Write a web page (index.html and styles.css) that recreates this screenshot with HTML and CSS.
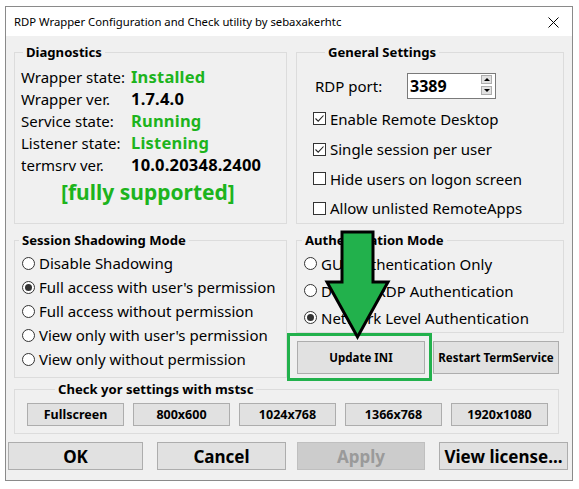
FILE: index.html
```html
<!DOCTYPE html>
<html>
<head>
<meta charset="utf-8">
<link rel="stylesheet" href="styles.css">
</head>
<body>
<div class="window">
  <div class="titlebar">
    <span class="title">RDP Wrapper Configuration and Check utility by sebaxakerhtc</span>
    <svg class="close" width="11" height="11" viewBox="0 0 11 11"><path d="M0.5 0.5 L10.5 10.5 M10.5 0.5 L0.5 10.5" stroke="#000" stroke-width="1" fill="none"/></svg>
  </div>
  <div class="client">
    <div class="row-top">
      <fieldset class="group diag">
        <legend>Diagnostics</legend>
        <div class="diag-grid">
          <span>Wrapper state:</span><span class="val green">Installed</span>
          <span>Wrapper ver.</span><span class="val">1.7.4.0</span>
          <span>Service state:</span><span class="val green">Running</span>
          <span>Listener state:</span><span class="val green">Listening</span>
          <span>termsrv ver.</span><span class="val">10.0.20348.2400</span>
        </div>
        <div class="supported">[fully supported]</div>
      </fieldset>
      <fieldset class="group general">
        <legend>General Settings</legend>
        <div class="port-row">
          <span class="port-label">RDP port:</span>
          <div class="spin-edit">
            <span class="port-val">3389</span>
            <div class="spin">
              <span class="spin-btn"><span class="tri-up"></span></span>
              <span class="spin-btn"><span class="tri-down"></span></span>
            </div>
          </div>
        </div>
        <div class="checks">
          <div class="opt"><span class="cbox"><svg width="11" height="11" viewBox="0 0 11 11"><path d="M1.5 5.5 L4.2 8.2 L9.5 2.5" stroke="#222" stroke-width="1.1" fill="none"/></svg></span>Enable Remote Desktop</div>
          <div class="opt"><span class="cbox"><svg width="11" height="11" viewBox="0 0 11 11"><path d="M1.5 5.5 L4.2 8.2 L9.5 2.5" stroke="#222" stroke-width="1.1" fill="none"/></svg></span>Single session per user</div>
          <div class="opt"><span class="cbox"></span>Hide users on logon screen</div>
          <div class="opt"><span class="cbox"></span>Allow unlisted RemoteApps</div>
        </div>
      </fieldset>
    </div>

    <div class="row-mid">
      <fieldset class="group shadow">
        <legend>Session Shadowing Mode</legend>
        <div class="radio-list">
          <div class="opt"><span class="radio"></span>Disable Shadowing</div>
          <div class="opt"><span class="radio on"></span>Full access with user's permission</div>
          <div class="opt"><span class="radio"></span>Full access without permission</div>
          <div class="opt"><span class="radio"></span>View only with user's permission</div>
          <div class="opt"><span class="radio"></span>View only without permission</div>
        </div>
      </fieldset>
      <div class="right-col">
        <fieldset class="group auth">
          <legend>Authentication Mode</legend>
          <div class="radio-list auth-list">
            <div class="opt"><span class="radio"></span>GUI Authentication Only</div>
            <div class="opt"><span class="radio"></span>Default RDP Authentication</div>
            <div class="opt"><span class="radio on"></span>Network Level Authentication</div>
          </div>
        </fieldset>
        <div class="action-row">
          <button class="btn btn-small btn-update">Update INI</button>
          <button class="btn btn-small btn-restart">Restart TermService</button>
        </div>
      </div>
    </div>

    <fieldset class="group check">
      <legend>Check yor settings with mstsc</legend>
      <div class="res-row">
        <button class="btn btn-res">Fullscreen</button>
        <button class="btn btn-res">800x600</button>
        <button class="btn btn-res">1024x768</button>
        <button class="btn btn-res">1366x768</button>
        <button class="btn btn-res">1920x1080</button>
      </div>
    </fieldset>

    <div class="bottom-row">
      <button class="btn btn-big btn-ok">OK</button>
      <button class="btn btn-big btn-cancel">Cancel</button>
      <button class="btn btn-big btn-apply" disabled>Apply</button>
      <button class="btn btn-big btn-license">View license...</button>
    </div>
  </div>
</div>

<svg class="overlay" width="579" height="489" viewBox="0 0 579 489">
  <rect x="288.5" y="334.5" width="142" height="45" fill="none" stroke="#22b14c" stroke-width="3"/>
  <polygon points="342,232 373,232 373,282 388,282 357.5,337 327,282 342,282" fill="#22b14c" stroke="#000" stroke-width="3" stroke-linejoin="miter"/>
</svg>
</body>
</html>
```

FILE: styles.css
```css
html, body {
  margin: 0;
  padding: 0;
  background: #ffffff;
}

body {
  font-family: "Noto Sans", "Open Sans", sans-serif;
  color: #000;
  width: 579px;
  height: 489px;
  overflow: hidden;
}

.window {
  margin: 6px 0 0 5px;
  width: 568px;
  height: 475px;
  box-sizing: border-box;
  border: 1px solid #8a8a8a;
  display: flex;
  flex-direction: column;
}

.titlebar {
  flex: none;
  height: 29px;
  background: #ffffff;
  display: flex;
  align-items: center;
  justify-content: space-between;
  padding: 0 13px 0 8px;
}

.title {
  font-size: 11.3px;
}

.close {
  display: block;
  margin-top: 2px;
}

.client {
  flex: 1;
  background: #f0f0f0;
  padding-top: 7px;
  display: flex;
  flex-direction: column;
}

.group {
  margin: 0;
  min-width: 0;
  box-sizing: border-box;
  border: 1px solid #dcdcdc;
}

.group legend {
  font-size: 13.1px;
  font-weight: 700;
  line-height: 18px;
  padding: 0 3px;
}

.row-top {
  display: grid;
  grid-template-columns: 273px 268px;
  column-gap: 9px;
  margin-left: 8px;
}

.group.diag {
  height: 181px;
  padding: 5px 0 0 6px;
}

.group.diag legend {
  margin-left: 2px;
}

.diag-grid {
  display: grid;
  grid-template-columns: 110px auto;
  font-size: 15px;
  line-height: 22px;
}

.val {
  font-weight: 700;
  font-size: 16.5px;
  letter-spacing: 0.2px;
}

.green {
  color: #1db41d;
}

.supported {
  margin-top: 2px;
  margin-left: 40px;
  font-size: 21px;
  line-height: 28px;
  font-weight: 700;
  color: #1db41d;
}

.group.general {
  height: 181px;
  padding: 12px 0 0 16px;
}

.group.general legend {
  margin-left: 12px;
}

.port-row {
  display: flex;
  align-items: center;
  height: 26px;
  font-size: 15px;
}

.port-label {
  margin-left: 2px;
  width: 92px;
}

.spin-edit {
  width: 89px;
  height: 26px;
  box-sizing: border-box;
  border: 1px solid #7a7a7a;
  background: #fff;
  display: flex;
  justify-content: space-between;
  padding: 1px 2px 0 2px;
}

.port-val {
  font-weight: 700;
  font-size: 16px;
  line-height: 23px;
}

.spin {
  display: flex;
  flex-direction: column;
  gap: 2px;
  margin-right: 1px;
}

.spin-btn {
  width: 11px;
  height: 9px;
  box-sizing: border-box;
  border: 1px solid #adadad;
  background: #e1e1e1;
  display: flex;
  align-items: center;
  justify-content: center;
}

.tri-up {
  width: 0;
  height: 0;
  border-left: 3px solid transparent;
  border-right: 3px solid transparent;
  border-bottom: 3px solid #000;
}

.tri-down {
  width: 0;
  height: 0;
  border-left: 3px solid transparent;
  border-right: 3px solid transparent;
  border-top: 3px solid #000;
}

.checks {
  margin-top: 4px;
  display: grid;
  grid-template-rows: 31px 30px 29px 30px;
  font-size: 15px;
}

.opt {
  display: flex;
  align-items: center;
  white-space: nowrap;
}

.cbox {
  width: 13px;
  height: 13px;
  box-sizing: border-box;
  border: 1px solid #333;
  background: #fff;
  margin-right: 4px;
  display: flex;
  align-items: center;
  justify-content: center;
  flex: none;
}

.cbox svg {
  display: block;
}

.radio {
  width: 13px;
  height: 13px;
  box-sizing: border-box;
  border: 1px solid #333;
  border-radius: 50%;
  background: #fff;
  margin-right: 4px;
  flex: none;
  display: flex;
  align-items: center;
  justify-content: center;
}

.radio.on::after {
  content: "";
  width: 7px;
  height: 7px;
  border-radius: 50%;
  background: #333;
}

.row-mid {
  margin-top: 7px;
  margin-left: 8px;
  display: grid;
  grid-template-columns: 273px 268px;
  column-gap: 9px;
  align-items: start;
}

.group.shadow {
  height: 147px;
  padding: 2px 0 0 7px;
}

.group.shadow legend {
  margin-left: -3px;
}

.radio-list {
  display: grid;
  grid-auto-rows: 24px;
  font-size: 15px;
}

.group.auth {
  height: 102px;
  padding: 1px 0 0 7px;
}

.group.auth legend {
  margin-left: -2px;
}

.radio-list.auth-list {
  grid-auto-rows: 27px;
}

.right-col {
  display: flex;
  flex-direction: column;
}

.action-row {
  margin-top: 8px;
  margin-left: 1px;
  display: flex;
  gap: 8px;
}

.btn {
  margin: 0;
  padding: 0;
  box-sizing: border-box;
  background: #e1e1e1;
  border: 1px solid #adadad;
  border-radius: 0;
  font-family: "Noto Sans", "Open Sans", sans-serif;
  font-weight: 700;
  color: #000;
  display: flex;
  align-items: center;
  justify-content: center;
  white-space: nowrap;
}

.btn-small {
  font-size: 11.5px;
}

.btn-update {
  width: 128px;
  height: 33px;
}

.btn-restart {
  width: 126px;
  height: 33px;
}

.group.check {
  margin-top: 2px;
  margin-left: 8px;
  width: 545px;
  height: 54px;
  padding: 5px 0 0 12px;
}

.group.check legend {
  margin-left: 28px;
}

.res-row {
  display: flex;
  gap: 9px;
}

.btn-res {
  width: 97px;
  height: 23px;
  font-size: 12.5px;
}

.bottom-row {
  margin-top: 8px;
  margin-left: 2px;
  display: flex;
}

.btn-big {
  height: 28px;
  font-size: 17px;
}

.btn-ok {
  width: 135px;
}

.btn-cancel {
  width: 129px;
  margin-left: 14px;
}

.btn.btn-apply {
  width: 128px;
  margin-left: 11px;
  background: #cccccc;
  border-color: #bfbfbf;
  color: #9a9a9a;
}

.btn-license {
  width: 129px;
  margin-left: 14px;
}

.overlay {
  position: absolute;
  left: 0;
  top: 0;
  pointer-events: none;
}
```
